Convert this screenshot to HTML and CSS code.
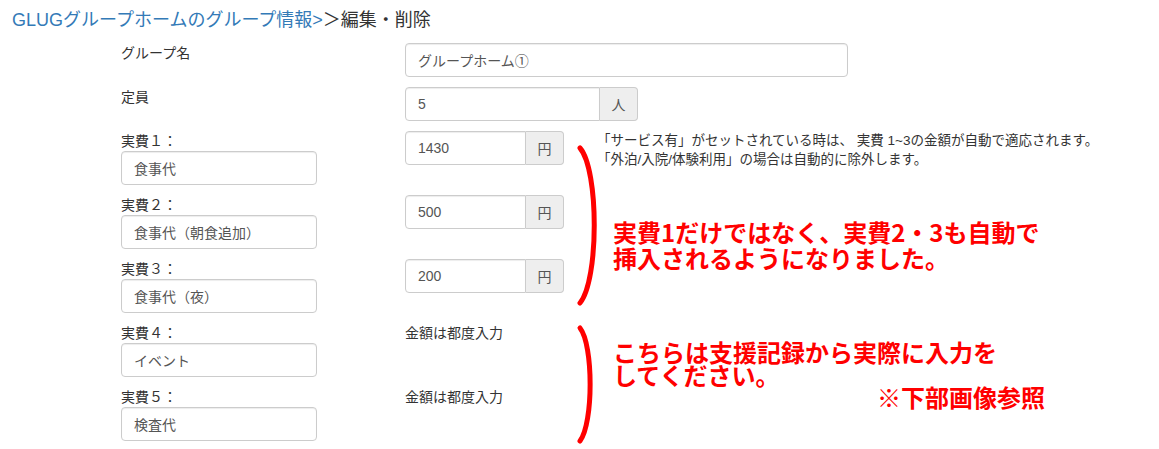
FILE: index.html
```html
<!DOCTYPE html>
<html lang="ja">
<head>
<meta charset="utf-8">
<title>編集・削除</title>
<link rel="stylesheet" href="styles.css">
</head>
<body>
<div class="breadcrumb"><a class="crumb-link" href="#">GLUGグループホームのグループ情報&gt;</a><span class="crumb-current">＞編集・削除</span></div>

<div class="form">
  <div class="row">
    <div class="row-label">グループ名</div>
    <input class="field field-wide" type="text" value="グループホーム①">
  </div>
  <div class="row">
    <div class="row-label">定員</div>
    <div class="group group-cap">
      <input class="field group-input" type="text" value="5">
      <span class="addon">人</span>
    </div>
  </div>

  <div class="fees">
    <div class="fee-row">
      <div class="fee-left">
        <div class="fee-label">実費１：</div>
        <input class="field fee-name" type="text" value="食事代">
      </div>
      <div class="fee-right">
        <div class="group group-fee">
          <input class="field group-input" type="text" value="1430">
          <span class="addon">円</span>
        </div>
        <div class="help">「サービス有」がセットされている時は、 実費 1~3の金額が自動で適応されます。<br>「外泊/入院/体験利用」の場合は自動的に除外します。</div>
      </div>
    </div>
    <div class="fee-row">
      <div class="fee-left">
        <div class="fee-label">実費２：</div>
        <input class="field fee-name" type="text" value="食事代（朝食追加）">
      </div>
      <div class="fee-right">
        <div class="group group-fee">
          <input class="field group-input" type="text" value="500">
          <span class="addon">円</span>
        </div>
      </div>
    </div>
    <div class="fee-row">
      <div class="fee-left">
        <div class="fee-label">実費３：</div>
        <input class="field fee-name" type="text" value="食事代（夜）">
      </div>
      <div class="fee-right">
        <div class="group group-fee">
          <input class="field group-input" type="text" value="200">
          <span class="addon">円</span>
        </div>
      </div>
    </div>
    <div class="fee-row">
      <div class="fee-left">
        <div class="fee-label">実費４：</div>
        <input class="field fee-name" type="text" value="イベント">
      </div>
      <div class="fee-right">
        <div class="fee-note">金額は都度入力</div>
      </div>
    </div>
    <div class="fee-row">
      <div class="fee-left">
        <div class="fee-label">実費５：</div>
        <input class="field fee-name" type="text" value="検査代">
      </div>
      <div class="fee-right">
        <div class="fee-note">金額は都度入力</div>
      </div>
    </div>

    <svg class="brackets" width="40" height="310" viewBox="0 0 40 310" aria-hidden="true">
      <path d="M10 8 C29 30, 29 140, 10 163" fill="none" stroke="#ff0000" stroke-width="5" stroke-linecap="round"/>
      <path d="M10 188 C23.5 205, 23.5 283, 10 301" fill="none" stroke="#ff0000" stroke-width="5" stroke-linecap="round"/>
    </svg>
    <div class="note note-auto">実費1だけではなく、実費2・3も自動で<br>挿入されるようになりました。</div>
    <div class="note note-manual">こちらは支援記録から実際に入力を<br>してください。</div>
    <div class="note note-ref">※下部画像参照</div>
  </div>
</div>
</body>
</html>
```

FILE: styles.css
```css
* { box-sizing: border-box; }

body {
  margin: 0;
  font-family: "Liberation Sans", "Noto Sans CJK JP", sans-serif;
  font-size: 14px;
  color: #333;
  background: #fff;
}

.breadcrumb {
  height: 43px;
  padding: 9px 12px 0;
  font-size: 18px;
  line-height: 22px;
  white-space: nowrap;
}
.crumb-link { color: #337ab7; text-decoration: none; }
.crumb-current { color: #333; }

.form { padding-left: 121px; }

.row {
  display: flex;
  margin-bottom: 10px;
}
.row-label {
  width: 284px;
  line-height: 20px;
}

.field {
  display: block;
  height: 34px;
  padding: 6px 12px;
  font: inherit;
  font-size: 14px;
  color: #555;
  background: #fff;
  border: 1px solid #ccc;
  border-radius: 4px;
  box-shadow: inset 0 1px 1px rgba(0,0,0,.075);
  outline: none;
}
.field-wide { width: 443px; }

.group {
  display: flex;
  height: 34px;
}
.group-cap { width: 233px; }
.group-fee { width: 159px; }
.group-input {
  flex: 1;
  min-width: 0;
  border-radius: 4px 0 0 4px;
}
.addon {
  width: 38px;
  display: flex;
  align-items: center;
  justify-content: center;
  background: #eee;
  border: 1px solid #ccc;
  border-left: 0;
  border-radius: 0 4px 4px 0;
  color: #555;
  font-size: 14px;
}

.fees { position: relative; }

.fee-row {
  display: flex;
  margin-bottom: 10px;
}
.fee-left { width: 196px; }
.fee-label { line-height: 20px; height: 20px; }
.fee-name { width: 196px; }
.fee-right {
  display: flex;
  align-items: flex-start;
  margin-left: 88px;
}
.help {
  margin-left: 33px;
  font-size: 13.5px;
  line-height: 19px;
  white-space: nowrap;
  color: #333;
}
.fee-note {
  line-height: 20px;
  font-size: 14px;
}

.brackets {
  position: absolute;
  left: 449px;
  top: 9px;
}

.note {
  position: absolute;
  color: #ff0000;
  font-family: "Noto Sans CJK JP", sans-serif;
  font-weight: 700;
  font-size: 24px;
  white-space: nowrap;
}
.note-auto { left: 492px; top: 88px; line-height: 26px; }
.note-manual { left: 492px; top: 209px; line-height: 23px; }
.note-ref { left: 756px; top: 255px; line-height: 22px; }
```
